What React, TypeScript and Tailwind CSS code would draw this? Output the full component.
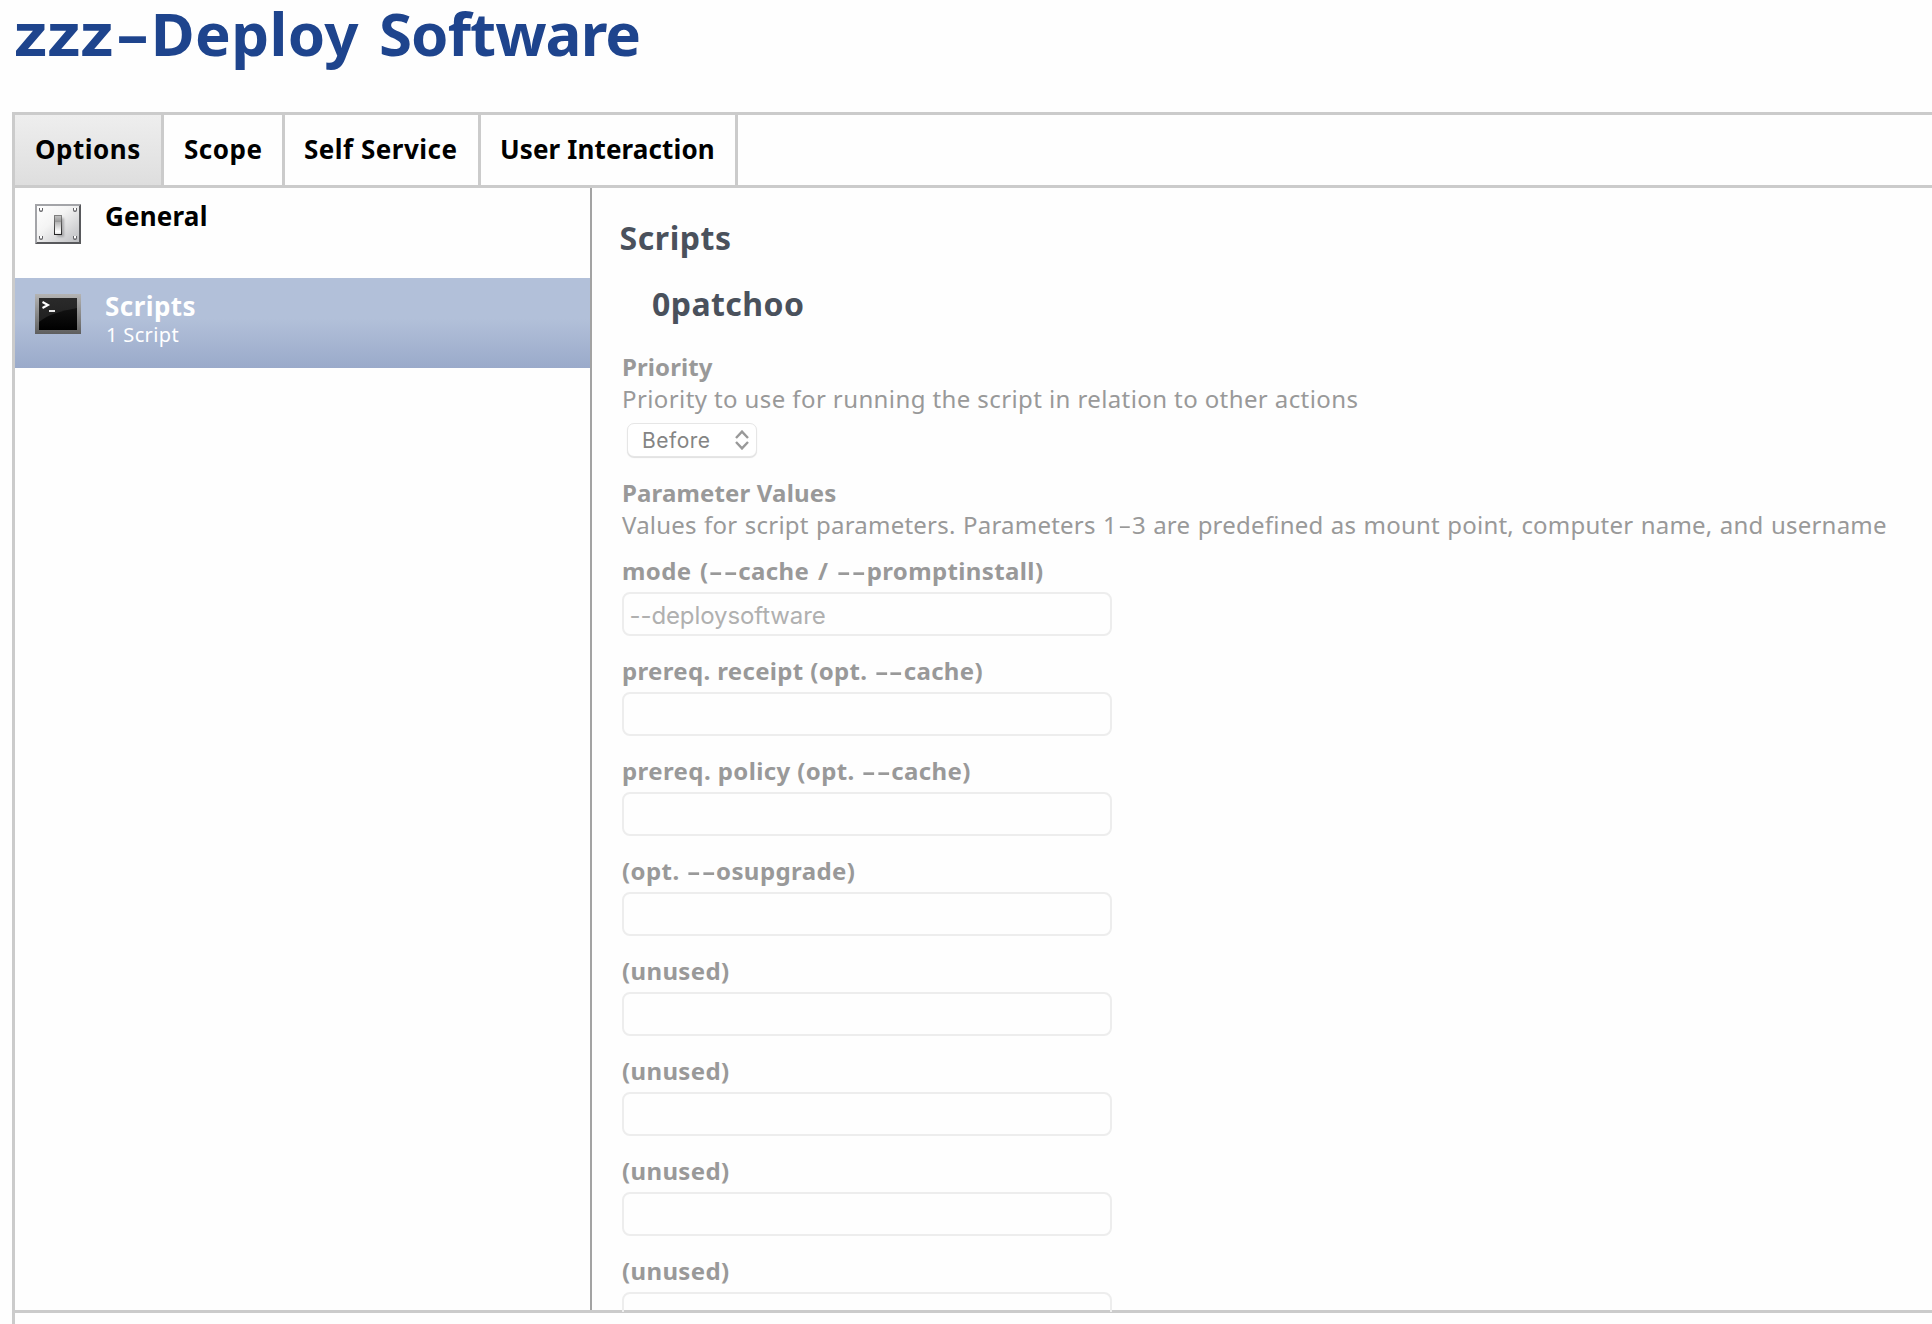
import React from 'react';

function Hyphen() {
  return <span className="mx-[0.15em] inline-block scale-x-[1.7] scale-y-90 tracking-normal">-</span>;
}

function WideText({ text }: { text: string }) {
  return (
    <>
      {text.split(/(-)/).map((part, i) => (part === '-' ? <Hyphen key={i} /> : part))}
    </>
  );
}

function SwitchIcon() {
  const screws = [[6, 6], [40, 6], [6, 34], [40, 34]];
  return (
    <svg width="46" height="40" viewBox="0 0 46 40" className="block">
      <defs>
        <linearGradient id="plate" x1="0" y1="0" x2="1" y2="1">
          <stop offset="0" stopColor="#ffffff" />
          <stop offset="0.4" stopColor="#f4f4f4" />
          <stop offset="1" stopColor="#bcbdc0" />
        </linearGradient>
        <linearGradient id="lever" x1="0" y1="0" x2="0" y2="1">
          <stop offset="0" stopColor="#c4c4c4" />
          <stop offset="0.32" stopColor="#999999" />
          <stop offset="0.36" stopColor="#b5b5b5" />
          <stop offset="0.85" stopColor="#ffffff" />
          <stop offset="1" stopColor="#dddddd" />
        </linearGradient>
        <linearGradient id="leverEdge" x1="0" y1="0" x2="0" y2="1">
          <stop offset="0" stopColor="#808080" />
          <stop offset="1" stopColor="#262626" />
        </linearGradient>
        <filter id="soft" x="-50%" y="-50%" width="200%" height="200%">
          <feGaussianBlur stdDeviation="1.2" />
        </filter>
      </defs>
      <path d="M0 0H46L44 2H2V38L0 40Z" fill="#a3a4a8" />
      <path d="M46 0V40H0L2 38H44V2Z" fill="#58595c" />
      <rect x="2" y="2" width="42" height="36" fill="url(#plate)" />
      {screws.map(([x, y]) => (
        <g key={`${x}-${y}`}>
          <path d={`M${x - 2} ${y - 2}V${y}A2 2 0 0 0 ${x + 2} ${y}V${y - 2}Z`} fill="#626266" />
          <rect x={x - 1} y={y - 2} width="2" height="2.4" fill="#ffffff" />
        </g>
      ))}
      <rect x="22" y="14" width="7" height="19" fill="#77777a" opacity="0.5" filter="url(#soft)" />
      <rect x="19.5" y="11.5" width="7" height="19" fill="url(#lever)" stroke="url(#leverEdge)" />
    </svg>
  );
}

function TerminalIcon() {
  return (
    <svg width="46" height="40" viewBox="0 0 46 40" className="block">
      <defs>
        <linearGradient id="frame" x1="0" y1="0" x2="0" y2="1">
          <stop offset="0" stopColor="#b4b4b4" />
          <stop offset="1" stopColor="#5e5e5e" />
        </linearGradient>
        <linearGradient id="glass" x1="0" y1="0" x2="0" y2="1">
          <stop offset="0" stopColor="#2a2a2a" />
          <stop offset="1" stopColor="#1c1c1c" />
        </linearGradient>
        <linearGradient id="shade" x1="0" y1="0" x2="0" y2="1">
          <stop offset="0" stopColor="#121212" />
          <stop offset="1" stopColor="#000000" />
        </linearGradient>
      </defs>
      <rect width="46" height="40" fill="url(#frame)" />
      <rect x="4" y="4" width="38" height="32" fill="url(#glass)" />
      <path d="M4 28C14 20 26 17 42 14V36H4Z" fill="url(#shade)" />
      <path d="M7.5 8L13 11L7.5 14" fill="none" stroke="#ffffff" strokeWidth="2" />
      <rect x="14" y="16" width="6" height="2" fill="#e8e8e8" />
    </svg>
  );
}

const tabs = [
  { label: 'Options', box: 'w-[149px] bg-linear-to-b from-[#eeeeee] to-[#dedede] pl-5', track: 'tracking-[0.5px]' },
  { label: 'Scope', box: 'w-[121px] pl-5', track: 'tracking-[0.5px]' },
  { label: 'Self Service', box: 'w-[196px] pl-[19px]', track: 'tracking-[0.5px]' },
  { label: 'User Interaction', box: 'w-[257px] pl-[19px]', track: 'tracking-[0.13px]' },
];

const fields = [
  { label: 'mode (--cache / --promptinstall)', value: '--deploysoftware', track: 'tracking-[0.38px] [word-spacing:2px]' },
  { label: 'prereq. receipt (opt. --cache)', value: '', track: 'tracking-[0.34px]' },
  { label: 'prereq. policy (opt. --cache)', value: '', track: 'tracking-[0.4px]' },
  { label: '(opt. --osupgrade)', value: '', track: 'tracking-[0.42px]' },
  { label: '(unused)', value: '', track: 'tracking-[0.35px]' },
  { label: '(unused)', value: '', track: 'tracking-[0.35px]' },
  { label: '(unused)', value: '', track: 'tracking-[0.35px]' },
  { label: '(unused)', value: '', track: 'tracking-[0.35px]' },
];

function Field({ label, value, track }: { label: string; value: string; track: string }) {
  return (
    <div className="h-[100px] shrink-0">
      <div className={`text-2xl/8 font-bold whitespace-nowrap ${track}`}>
        <WideText text={label} />
      </div>
      <div className="mt-[5px] h-11 w-[490px] rounded-lg border-2 border-[#ededed] pt-[3px] pl-[5.5px] font-['Inter',sans-serif] text-2xl/9.5 tracking-[-0.1px] text-[#b0b0b0]">
        {value}
      </div>
    </div>
  );
}

export default function App() {
  return (
    <div className="flex h-[1324px] w-full flex-col overflow-hidden bg-[#fefefe] font-['Noto_Sans',sans-serif]">
      <h1 className="h-28 shrink-0 pt-px pl-3.5 text-[60px]/16 font-bold whitespace-nowrap text-[#1e448d]">
        <span className="mr-[10.8px] inline-block origin-left scale-x-[1.12]">zzz</span>
        <Hyphen />
        <span className="tracking-[0.35px] [word-spacing:4px]">Deploy </span>
        <span className="tracking-[-0.9px]">Software</span>
      </h1>

      <div className="ml-3 flex grow flex-col border-t-3 border-l-3 border-[#cbcbcb]">
        <nav className="flex h-[73px] shrink-0 border-b-3 border-[#cbcbcb]">
          {tabs.map((tab) => (
            <div
              key={tab.label}
              className={`shrink-0 border-r-3 border-[#cbcbcb] text-[26px]/[68px] font-bold whitespace-nowrap text-black ${tab.box} ${tab.track}`}
            >
              {tab.label}
            </div>
          ))}
        </nav>

        <div className="flex h-[1125px] shrink-0 border-b-3 border-[#cbcbcb]">
          <aside className="w-[577px] shrink-0 border-r-2 border-[#a3a3a3]">
            <div className="flex h-[90px] gap-6 pl-5">
              <div className="pt-4">
                <SwitchIcon />
              </div>
              <div className="pt-3 text-[26px]/8 font-bold tracking-[0.2px] text-black">General</div>
            </div>
            <div className="flex h-[90px] gap-6 bg-linear-to-b from-[#b2c0d9] from-45% to-[#9aaaca] pl-5 text-white">
              <div className="pt-4">
                <TerminalIcon />
              </div>
              <div className="pt-3">
                <div className="text-[26px]/8 font-bold tracking-[0.45px]">Scripts</div>
                <div className="mt-px pl-px text-xl/6 tracking-[0.35px]">1 Script</div>
              </div>
            </div>
          </aside>

          <main className="flex h-[1124px] grow flex-col overflow-hidden pl-[30px] text-[#999999]">
            <h2 className="-ml-[2.5px] pt-[30px] text-[32px]/10 font-bold tracking-[0.56px] text-[#4a515c]">Scripts</h2>
            <h3 className="mt-[26px] pl-[30px] text-[32px]/10 font-bold tracking-[0.44px] text-[#4a515c]">0patchoo</h3>

            <div className="mt-[27px] text-2xl/8 font-bold tracking-[0.1px]">Priority</div>
            <div className="text-2xl/8 tracking-[0.4px] whitespace-nowrap">
              Priority to use for running the script in relation to other actions
            </div>
            <div className="mt-2 ml-[5px] flex h-[34px] w-[130px] shrink-0 items-center justify-between rounded-[7px] border border-[#e6e6e6] bg-white pr-[7px] pl-3.5 font-['Inter',sans-serif] text-[21px]/8 tracking-[0.5px] text-[#848484] shadow-[0_1px_1px_rgba(0,0,0,0.12)]">
              <span className="pt-0.5">Before</span>
              <svg width="14" height="20" viewBox="0 0 14 20" fill="none" stroke="#999999" strokeWidth="2.4">
                <path d="M1 8L7 1.6L13 8" />
                <path d="M1 12L7 18.4L13 12" />
              </svg>
            </div>

            <div className="mt-5 text-2xl/8 font-bold tracking-[0.15px]">Parameter Values</div>
            <div className="mb-3.5 text-2xl/8 tracking-[0.22px] whitespace-nowrap [word-spacing:0.9px]">
              <WideText text="Values for script parameters. Parameters 1-3 are predefined as mount point, computer name, and username" />
            </div>

            {fields.map((field, i) => (
              <Field key={i} {...field} />
            ))}
          </main>
        </div>
      </div>
    </div>
  );
}
